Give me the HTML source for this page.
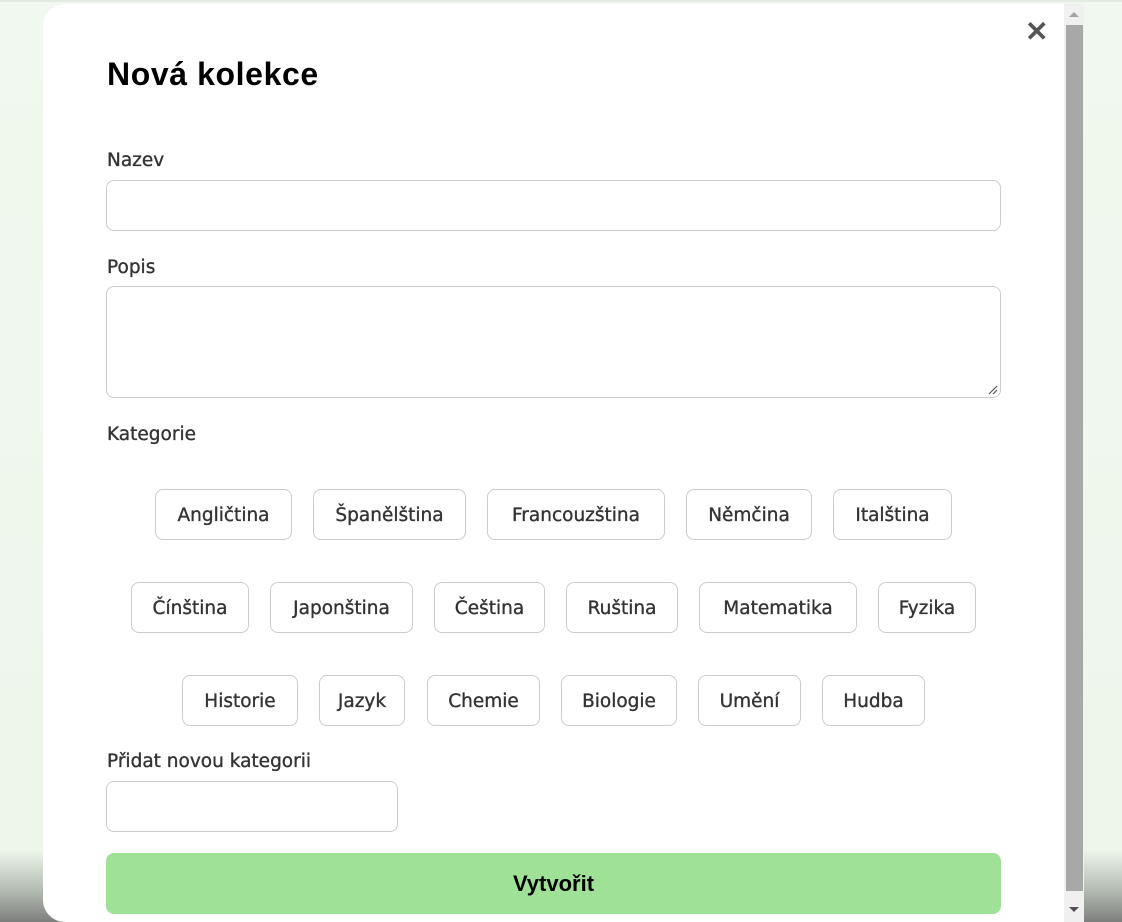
<!DOCTYPE html>
<html><head><meta charset="utf-8"><style>
*{box-sizing:border-box;margin:0;padding:0}
html,body{width:1122px;height:922px;overflow:hidden}
body{position:relative;font-family:"Liberation Sans",sans-serif;
background:linear-gradient(to bottom,#f1f8ef 0,#eef6ec 850px,#b5bcb3 890px,#7d7f7c 922px);}
.topline{position:absolute;left:0;top:0;width:1122px;height:2px;background:#e4ebe3}
.modal{position:absolute;left:43px;top:4px;width:1041px;height:918px;background:#fff;border-radius:22px 22px 0 22px}
.sb{position:absolute;left:1064px;top:4px;width:20px;height:918px;background:#f0f0f0}
.thumb{position:absolute;left:1066px;top:25px;width:17px;height:866px;background:#a8a8a8}
.up{position:absolute;left:1069px;top:12px;width:0;height:0;border-left:5px solid transparent;border-right:5px solid transparent;border-bottom:5px solid #a3a3a3}
.dn{position:absolute;left:1069px;top:907px;width:0;height:0;border-left:5px solid transparent;border-right:5px solid transparent;border-top:5px solid #505050}
h1{position:absolute;left:107px;top:56px;font-size:32px;font-weight:bold;color:#000;letter-spacing:0.6px}
.lbl{position:absolute;left:107px;font-family:"DejaVu Sans",sans-serif;font-size:18.5px;color:#333;-webkit-text-stroke:0.35px #333}
.inp{position:absolute;border:1px solid #ccc;border-radius:8px;background:#fff}
.b{position:absolute;height:51px;padding-top:2px;border:1px solid #ccc;border-radius:8px;background:#fff;font-family:"DejaVu Sans",sans-serif;font-size:18.5px;color:#333;-webkit-text-stroke:0.35px #333;display:flex;align-items:center;justify-content:center}
.go{position:absolute;left:106px;top:853px;width:895px;height:61px;background:#9fe196;border-radius:8px;font-size:22px;font-weight:bold;color:#000;display:flex;align-items:center;justify-content:center}
.x{position:absolute;left:1025px;top:18px;font-size:28px;font-weight:bold;color:#555;line-height:28px}
</style></head><body>
<div class="topline"></div>
<div class="modal"></div>
<div class="sb"></div><div class="thumb"></div><div class="up"></div><div class="dn"></div>
<div class="x">✕</div>
<h1>Nová kolekce</h1>
<div class="lbl" style="top:150px">Nazev</div>
<div class="inp" style="left:106px;top:180px;width:895px;height:51px"></div>
<div class="lbl" style="top:257px">Popis</div>
<div class="inp" style="left:106px;top:286px;width:895px;height:112px"></div>
<svg style="position:absolute;left:988px;top:385px" width="10" height="10"><path d="M1 9L9 1M5 9L9 5" stroke="#555" stroke-width="1.2"/></svg>
<div class="lbl" style="top:424px">Kategorie</div>
<div class="b" style="left:155px;top:489px;width:137px">Angličtina</div>
<div class="b" style="left:313px;top:489px;width:153px">Španělština</div>
<div class="b" style="left:487px;top:489px;width:178px">Francouzština</div>
<div class="b" style="left:686px;top:489px;width:126px">Němčina</div>
<div class="b" style="left:833px;top:489px;width:119px">Italština</div>
<div class="b" style="left:131px;top:582px;width:118px">Čínština</div>
<div class="b" style="left:270px;top:582px;width:143px">Japonština</div>
<div class="b" style="left:434px;top:582px;width:111px">Čeština</div>
<div class="b" style="left:566px;top:582px;width:112px">Ruština</div>
<div class="b" style="left:699px;top:582px;width:158px">Matematika</div>
<div class="b" style="left:878px;top:582px;width:98px">Fyzika</div>
<div class="b" style="left:182px;top:675px;width:116px">Historie</div>
<div class="b" style="left:319px;top:675px;width:86px">Jazyk</div>
<div class="b" style="left:427px;top:675px;width:113px">Chemie</div>
<div class="b" style="left:561px;top:675px;width:116px">Biologie</div>
<div class="b" style="left:698px;top:675px;width:103px">Umění</div>
<div class="b" style="left:822px;top:675px;width:103px">Hudba</div>
<div class="lbl" style="top:751px">Přidat novou kategorii</div>
<div class="inp" style="left:106px;top:781px;width:292px;height:51px"></div>
<div class="go">Vytvořit</div>
</body></html>
